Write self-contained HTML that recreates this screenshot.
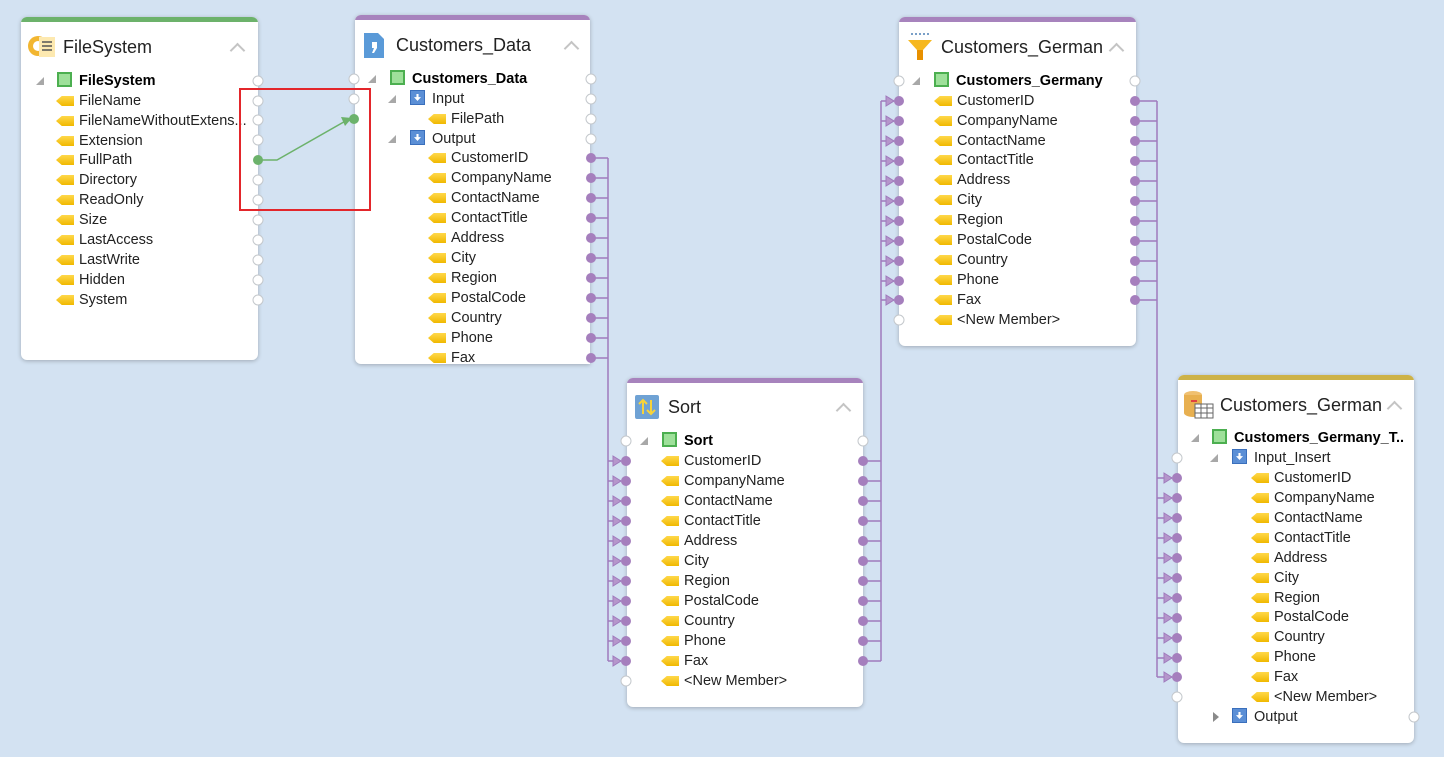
<!DOCTYPE html>
<html><head><meta charset="utf-8"><style>
body{margin:0;width:1444px;height:757px;background:#d3e2f2;position:relative;overflow:hidden;font-family:"Liberation Sans",sans-serif;color:#222}
.c{position:absolute;background:#fff;border-radius:6px;box-shadow:0 1px 4px rgba(0,0,0,.25);overflow:hidden}
.c .bar{height:5px}
.t{position:absolute;font-size:18px;line-height:24px;white-space:nowrap;color:#222}
.ch{position:absolute;width:9px;height:9px;border-left:2px solid #c4c4c4;border-top:2px solid #c4c4c4;transform:rotate(45deg)}
.r{position:absolute;font-size:14.5px;height:20px;line-height:20px;white-space:nowrap;color:#222}
.r b{font-weight:bold;color:#000}
.f{display:inline-block;width:18px;height:10px;background:linear-gradient(#ffd84a,#f0b800);clip-path:polygon(0 50%,32% 0,100% 0,100% 100%,32% 100%);margin-right:5px;vertical-align:-1px}
.sq{display:inline-block;width:11px;height:11px;border:2px solid #4caf50;background:#9ee09a;margin-right:7px;vertical-align:-2px}
.bl{display:inline-block;width:13px;height:13px;background:#5b8fd6;border:1px solid #3a6fbc;margin-right:7px;vertical-align:-2px;position:relative}
.bl:after{content:"";position:absolute;left:3px;top:3px;width:7px;height:7px;background:#fff;clip-path:polygon(35% 0,65% 0,65% 45%,100% 45%,50% 100%,0 45%,35% 45%)}
.tri{position:absolute;width:0;height:0;border-left:8px solid transparent;border-bottom:8px solid #a8a8a8}
.tr2{position:absolute;width:0;height:0;border-top:5px solid transparent;border-bottom:5px solid transparent;border-left:6px solid #8a8a8a}
</style></head><body>

<!-- Card 1 -->
<div class="c" style="left:21px;top:17px;width:237px;height:343px"><div class="bar" style="background:#6cb26b"></div></div>
<svg style="position:absolute;left:27px;top:33px" width="30" height="28"><circle cx="11" cy="13" r="10" fill="#f2b630"/><circle cx="11" cy="13" r="5" fill="#fff"/><rect x="12" y="4" width="16" height="20" fill="#fde9b0"/><path d="M15 9h10M15 13h10M15 17h10" stroke="#555" stroke-width="1.5"/></svg>
<div class="t" style="left:63px;top:35px">FileSystem</div>
<div class="ch" style="left:232px;top:45px"></div>
<div class="tri" style="left:36px;top:77px"></div>
<div class="r" style="left:57px;top:71px"><span class="sq"></span><b>FileSystem</b></div>
<div class="r" style="left:56px;top:91px"><span class="f"></span>FileName</div>
<div class="r" style="left:56px;top:111px"><span class="f"></span>FileNameWithoutExtens...</div>
<div class="r" style="left:56px;top:131px"><span class="f"></span>Extension</div>
<div class="r" style="left:56px;top:150px"><span class="f"></span>FullPath</div>
<div class="r" style="left:56px;top:170px"><span class="f"></span>Directory</div>
<div class="r" style="left:56px;top:190px"><span class="f"></span>ReadOnly</div>
<div class="r" style="left:56px;top:210px"><span class="f"></span>Size</div>
<div class="r" style="left:56px;top:230px"><span class="f"></span>LastAccess</div>
<div class="r" style="left:56px;top:250px"><span class="f"></span>LastWrite</div>
<div class="r" style="left:56px;top:270px"><span class="f"></span>Hidden</div>
<div class="r" style="left:56px;top:290px"><span class="f"></span>System</div>

<!-- Card 2 -->
<div class="c" style="left:355px;top:15px;width:235px;height:349px;border-radius:6px 6px 0 6px"><div class="bar" style="background:#a783bd"></div></div>
<svg style="position:absolute;left:362px;top:30px" width="24" height="30"><path d="M2 3h14l6 6v19H2z" fill="#5a9ad8"/><path d="M10 12h5v6l-3 5h-2l2-5h-2z" fill="#fff"/></svg>
<div class="t" style="left:396px;top:33px">Customers_Data</div>
<div class="ch" style="left:566px;top:43px"></div>
<div class="tri" style="left:368px;top:75px"></div>
<div class="r" style="left:390px;top:69px"><span class="sq"></span><b>Customers_Data</b></div>
<div class="tri" style="left:388px;top:95px"></div>
<div class="r" style="left:410px;top:89px"><span class="bl"></span>Input</div>
<div class="r" style="left:428px;top:109px"><span class="f"></span>FilePath</div>
<div class="tri" style="left:388px;top:135px"></div>
<div class="r" style="left:410px;top:129px"><span class="bl"></span>Output</div>
<div class="r" style="left:428px;top:148px"><span class="f"></span>CustomerID</div>
<div class="r" style="left:428px;top:168px"><span class="f"></span>CompanyName</div>
<div class="r" style="left:428px;top:188px"><span class="f"></span>ContactName</div>
<div class="r" style="left:428px;top:208px"><span class="f"></span>ContactTitle</div>
<div class="r" style="left:428px;top:228px"><span class="f"></span>Address</div>
<div class="r" style="left:428px;top:248px"><span class="f"></span>City</div>
<div class="r" style="left:428px;top:268px"><span class="f"></span>Region</div>
<div class="r" style="left:428px;top:288px"><span class="f"></span>PostalCode</div>
<div class="r" style="left:428px;top:308px"><span class="f"></span>Country</div>
<div class="r" style="left:428px;top:328px"><span class="f"></span>Phone</div>
<div class="r" style="left:428px;top:348px"><span class="f"></span>Fax</div>

<!-- Card 3 Sort -->
<div class="c" style="left:627px;top:378px;width:236px;height:329px"><div class="bar" style="background:#a783bd"></div></div>
<svg style="position:absolute;left:634px;top:394px" width="26" height="26"><rect x="1" y="1" width="24" height="24" rx="2" fill="#6fa2d4"/><path d="M9 20V6M5 10l4-4 4 4M17 6v14M13 16l4 4 4-4" stroke="#f7d33a" stroke-width="2" fill="none"/></svg>
<div class="t" style="left:668px;top:395px">Sort</div>
<div class="ch" style="left:838px;top:405px"></div>
<div class="tri" style="left:640px;top:437px"></div>
<div class="r" style="left:662px;top:431px"><span class="sq"></span><b>Sort</b></div>
<div class="r" style="left:661px;top:451px"><span class="f"></span>CustomerID</div>
<div class="r" style="left:661px;top:471px"><span class="f"></span>CompanyName</div>
<div class="r" style="left:661px;top:491px"><span class="f"></span>ContactName</div>
<div class="r" style="left:661px;top:511px"><span class="f"></span>ContactTitle</div>
<div class="r" style="left:661px;top:531px"><span class="f"></span>Address</div>
<div class="r" style="left:661px;top:551px"><span class="f"></span>City</div>
<div class="r" style="left:661px;top:571px"><span class="f"></span>Region</div>
<div class="r" style="left:661px;top:591px"><span class="f"></span>PostalCode</div>
<div class="r" style="left:661px;top:611px"><span class="f"></span>Country</div>
<div class="r" style="left:661px;top:631px"><span class="f"></span>Phone</div>
<div class="r" style="left:661px;top:651px"><span class="f"></span>Fax</div>
<div class="r" style="left:661px;top:671px"><span class="f"></span>&lt;New Member&gt;</div>

<!-- Card 4 -->
<div class="c" style="left:899px;top:17px;width:237px;height:329px"><div class="bar" style="background:#a783bd"></div></div>
<svg style="position:absolute;left:906px;top:32px" width="28" height="30"><path d="M5 2h2M9 2h2M13 2h2M17 2h2M21 2h2" stroke="#7aa0c8" stroke-width="2"/><path d="M2 8h24l-9 10v10h-6V18z" fill="#f6b81e"/><path d="M11 18h6v10h-6z" fill="#e89000"/></svg>
<div class="t" style="left:941px;top:35px;width:162px;overflow:hidden">Customers_Germany</div>
<div class="ch" style="left:1111px;top:45px"></div>
<div class="tri" style="left:912px;top:77px"></div>
<div class="r" style="left:934px;top:71px"><span class="sq"></span><b>Customers_Germany</b></div>
<div class="r" style="left:934px;top:91px"><span class="f"></span>CustomerID</div>
<div class="r" style="left:934px;top:111px"><span class="f"></span>CompanyName</div>
<div class="r" style="left:934px;top:131px"><span class="f"></span>ContactName</div>
<div class="r" style="left:934px;top:150px"><span class="f"></span>ContactTitle</div>
<div class="r" style="left:934px;top:170px"><span class="f"></span>Address</div>
<div class="r" style="left:934px;top:190px"><span class="f"></span>City</div>
<div class="r" style="left:934px;top:210px"><span class="f"></span>Region</div>
<div class="r" style="left:934px;top:230px"><span class="f"></span>PostalCode</div>
<div class="r" style="left:934px;top:250px"><span class="f"></span>Country</div>
<div class="r" style="left:934px;top:270px"><span class="f"></span>Phone</div>
<div class="r" style="left:934px;top:290px"><span class="f"></span>Fax</div>
<div class="r" style="left:934px;top:310px"><span class="f"></span>&lt;New Member&gt;</div>

<!-- Card 5 -->
<div class="c" style="left:1178px;top:375px;width:236px;height:368px"><div class="bar" style="background:#cdb247"></div></div>
<svg style="position:absolute;left:1183px;top:390px" width="32" height="30"><ellipse cx="10" cy="5" rx="9" ry="4" fill="#f0c070"/><path d="M1 5v18c0 2 4 4 9 4s9-2 9-4V5" fill="#e8b050"/><rect x="8" y="10" width="6" height="2" fill="#e04040"/><rect x="12" y="14" width="18" height="14" fill="#fff" stroke="#666"/><path d="M12 18h18M12 23h18M18 14v14M24 14v14" stroke="#666"/></svg>
<div class="t" style="left:1220px;top:393px;width:162px;overflow:hidden">Customers_Germany</div>
<div class="ch" style="left:1389px;top:403px"></div>
<div class="tri" style="left:1191px;top:434px"></div>
<div class="r" style="left:1212px;top:428px"><span class="sq"></span><b>Customers_Germany_T..</b></div>
<div class="tri" style="left:1210px;top:454px"></div>
<div class="r" style="left:1232px;top:448px"><span class="bl"></span>Input_Insert</div>
<div class="r" style="left:1251px;top:468px"><span class="f"></span>CustomerID</div>
<div class="r" style="left:1251px;top:488px"><span class="f"></span>CompanyName</div>
<div class="r" style="left:1251px;top:508px"><span class="f"></span>ContactName</div>
<div class="r" style="left:1251px;top:528px"><span class="f"></span>ContactTitle</div>
<div class="r" style="left:1251px;top:548px"><span class="f"></span>Address</div>
<div class="r" style="left:1251px;top:568px"><span class="f"></span>City</div>
<div class="r" style="left:1251px;top:588px"><span class="f"></span>Region</div>
<div class="r" style="left:1251px;top:607px"><span class="f"></span>PostalCode</div>
<div class="r" style="left:1251px;top:627px"><span class="f"></span>Country</div>
<div class="r" style="left:1251px;top:647px"><span class="f"></span>Phone</div>
<div class="r" style="left:1251px;top:667px"><span class="f"></span>Fax</div>
<div class="r" style="left:1251px;top:687px"><span class="f"></span>&lt;New Member&gt;</div>
<div class="tr2" style="left:1213px;top:712px"></div>
<div class="r" style="left:1232px;top:707px"><span class="bl"></span>Output</div>

<svg style="position:absolute;left:0;top:0" width="1444" height="757">
<g stroke="#a07bbd" stroke-width="1.5" fill="none">
<path d="M591 158H608M591 178H608M591 198H608M591 218H608M591 238H608M591 258H608M591 278H608M591 298H608M591 318H608M591 338H608M591 358H608M608 158V661"/>
<path d="M608 461H621M608 481H621M608 501H621M608 521H621M608 541H621M608 561H621M608 581H621M608 601H621M608 621H621M608 641H621M608 661H621"/>
<path d="M863 461H881M863 481H881M863 501H881M863 521H881M863 541H881M863 561H881M863 581H881M863 601H881M863 621H881M863 641H881M863 661H881M881 101V661"/>
<path d="M881 101H894M881 121H894M881 141H894M881 161H894M881 181H894M881 201H894M881 221H894M881 241H894M881 261H894M881 281H894M881 300H894"/>
<path d="M1135 101H1157M1135 121H1157M1135 141H1157M1135 161H1157M1135 181H1157M1135 201H1157M1135 221H1157M1135 241H1157M1135 261H1157M1135 281H1157M1135 300H1157M1157 101V677"/>
<path d="M1157 478H1172M1157 498H1172M1157 518H1172M1157 538H1172M1157 558H1172M1157 578H1172M1157 598H1172M1157 618H1172M1157 638H1172M1157 658H1172M1157 677H1172"/>
</g>
<g fill="#b596cb" stroke="#a07bbd" stroke-width="1">
<path d="M613 456L621 461L613 466zM613 476L621 481L613 486zM613 496L621 501L613 506zM613 516L621 521L613 526zM613 536L621 541L613 546zM613 556L621 561L613 566zM613 576L621 581L613 586zM613 596L621 601L613 606zM613 616L621 621L613 626zM613 636L621 641L613 646zM613 656L621 661L613 666z"/>
<path d="M886 96L894 101L886 106zM886 116L894 121L886 126zM886 136L894 141L886 146zM886 156L894 161L886 166zM886 176L894 181L886 186zM886 196L894 201L886 206zM886 216L894 221L886 226zM886 236L894 241L886 246zM886 256L894 261L886 266zM886 276L894 281L886 286zM886 295L894 300L886 305z"/>
<path d="M1164 473L1172 478L1164 483zM1164 493L1172 498L1164 503zM1164 513L1172 518L1164 523zM1164 533L1172 538L1164 543zM1164 553L1172 558L1164 563zM1164 573L1172 578L1164 583zM1164 593L1172 598L1164 603zM1164 613L1172 618L1164 623zM1164 633L1172 638L1164 643zM1164 653L1172 658L1164 663zM1164 672L1172 677L1164 682z"/>
</g>
<path d="M258 160H277L349 119" stroke="#6cb26b" stroke-width="1.5" fill="none"/>
<path d="M341 117L352 118L345 126z" fill="#6cb26b"/>
<rect x="240" y="89" width="130" height="121" fill="none" stroke="#e3262b" stroke-width="2"/>
<g fill="#fff" stroke="#c4c8cc" stroke-width="1">
<circle cx="258" cy="81" r="5"/><circle cx="258" cy="101" r="5"/><circle cx="258" cy="120" r="5"/><circle cx="258" cy="140" r="5"/><circle cx="258" cy="180" r="5"/><circle cx="258" cy="200" r="5"/><circle cx="258" cy="220" r="5"/><circle cx="258" cy="240" r="5"/><circle cx="258" cy="260" r="5"/><circle cx="258" cy="280" r="5"/><circle cx="258" cy="300" r="5"/>
<circle cx="354" cy="79" r="5"/><circle cx="354" cy="99" r="5"/>
<circle cx="591" cy="79" r="5"/><circle cx="591" cy="99" r="5"/><circle cx="591" cy="119" r="5"/><circle cx="591" cy="139" r="5"/>
<circle cx="626" cy="441" r="5"/><circle cx="863" cy="441" r="5"/><circle cx="626" cy="681" r="5"/>
<circle cx="899" cy="81" r="5"/><circle cx="1135" cy="81" r="5"/><circle cx="899" cy="320" r="5"/>
<circle cx="1177" cy="458" r="5"/><circle cx="1177" cy="697" r="5"/><circle cx="1414" cy="717" r="5"/>
</g>
<g fill="#6cb26b"><circle cx="258" cy="160" r="5"/><circle cx="354" cy="119" r="5"/></g>
<g fill="#a57fbd">
<circle cx="591" cy="158" r="5"/><circle cx="591" cy="178" r="5"/><circle cx="591" cy="198" r="5"/><circle cx="591" cy="218" r="5"/><circle cx="591" cy="238" r="5"/><circle cx="591" cy="258" r="5"/><circle cx="591" cy="278" r="5"/><circle cx="591" cy="298" r="5"/><circle cx="591" cy="318" r="5"/><circle cx="591" cy="338" r="5"/><circle cx="591" cy="358" r="5"/>
<circle cx="626" cy="461" r="5"/><circle cx="626" cy="481" r="5"/><circle cx="626" cy="501" r="5"/><circle cx="626" cy="521" r="5"/><circle cx="626" cy="541" r="5"/><circle cx="626" cy="561" r="5"/><circle cx="626" cy="581" r="5"/><circle cx="626" cy="601" r="5"/><circle cx="626" cy="621" r="5"/><circle cx="626" cy="641" r="5"/><circle cx="626" cy="661" r="5"/>
<circle cx="863" cy="461" r="5"/><circle cx="863" cy="481" r="5"/><circle cx="863" cy="501" r="5"/><circle cx="863" cy="521" r="5"/><circle cx="863" cy="541" r="5"/><circle cx="863" cy="561" r="5"/><circle cx="863" cy="581" r="5"/><circle cx="863" cy="601" r="5"/><circle cx="863" cy="621" r="5"/><circle cx="863" cy="641" r="5"/><circle cx="863" cy="661" r="5"/>
<circle cx="899" cy="101" r="5"/><circle cx="899" cy="121" r="5"/><circle cx="899" cy="141" r="5"/><circle cx="899" cy="161" r="5"/><circle cx="899" cy="181" r="5"/><circle cx="899" cy="201" r="5"/><circle cx="899" cy="221" r="5"/><circle cx="899" cy="241" r="5"/><circle cx="899" cy="261" r="5"/><circle cx="899" cy="281" r="5"/><circle cx="899" cy="300" r="5"/>
<circle cx="1135" cy="101" r="5"/><circle cx="1135" cy="121" r="5"/><circle cx="1135" cy="141" r="5"/><circle cx="1135" cy="161" r="5"/><circle cx="1135" cy="181" r="5"/><circle cx="1135" cy="201" r="5"/><circle cx="1135" cy="221" r="5"/><circle cx="1135" cy="241" r="5"/><circle cx="1135" cy="261" r="5"/><circle cx="1135" cy="281" r="5"/><circle cx="1135" cy="300" r="5"/>
<circle cx="1177" cy="478" r="5"/><circle cx="1177" cy="498" r="5"/><circle cx="1177" cy="518" r="5"/><circle cx="1177" cy="538" r="5"/><circle cx="1177" cy="558" r="5"/><circle cx="1177" cy="578" r="5"/><circle cx="1177" cy="598" r="5"/><circle cx="1177" cy="618" r="5"/><circle cx="1177" cy="638" r="5"/><circle cx="1177" cy="658" r="5"/><circle cx="1177" cy="677" r="5"/>
</g>
</svg>
</body></html>
